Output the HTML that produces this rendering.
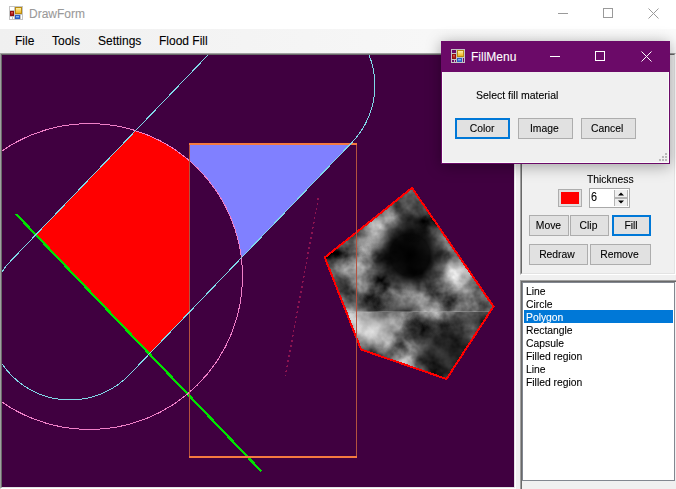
<!DOCTYPE html>
<html><head><meta charset="utf-8">
<style>
*{box-sizing:border-box}
html,body{margin:0;padding:0}
body{width:676px;height:489px;overflow:hidden;position:relative;background:#f0f0f0;font-family:"Liberation Sans",sans-serif;-webkit-text-stroke:0.1px currentColor}
.a{position:absolute}
.t{position:absolute;white-space:nowrap;line-height:1}
.c{transform:scaleX(0.94);transform-origin:0 0}
.btn{position:absolute;background:#e1e1e1;border:1px solid #adadad;font-size:11px;color:#000;text-align:center;line-height:19px;padding-right:2px}
.btn span{display:inline-block;transform:scaleX(0.94)}
.btn.f{border:2px solid #0078d7;line-height:17px}
</style></head><body>
<!-- title bar -->
<div class="a" style="left:0;top:0;width:676px;height:29px;background:#fff"></div>
<svg class="a" style="left:9px;top:6px" width="14" height="14" viewBox="0 0 14 14" shape-rendering="crispEdges">
 <defs><linearGradient id="yg" x1="0" y1="0" x2="0" y2="1"><stop offset="0" stop-color="#fff2a8"/><stop offset="1" stop-color="#f0b420"/></linearGradient>
 <linearGradient id="rg" x1="0" y1="0" x2="0" y2="1"><stop offset="0" stop-color="#e86050"/><stop offset="1" stop-color="#a01010"/></linearGradient>
 <linearGradient id="bg" x1="0" y1="0" x2="0" y2="1"><stop offset="0" stop-color="#a0c8ff"/><stop offset="1" stop-color="#3070d0"/></linearGradient></defs>
 <rect x="0" y="0" width="14" height="14" fill="#c4c4c4"/>
 <rect x="1" y="1" width="4" height="3" fill="#fff"/>
 <rect x="1" y="11" width="2" height="2" fill="#fff"/><rect x="4" y="11" width="1" height="2" fill="#fff"/>
 <rect x="12" y="9" width="1" height="4" fill="#fff"/>
 <rect x="6" y="1" width="7" height="7" fill="#b88a10"/><rect x="7" y="2" width="5" height="5" fill="url(#yg)"/>
 <rect x="1" y="5" width="4" height="5" fill="#901010"/><rect x="2" y="6" width="2" height="3" fill="url(#rg)"/>
 <rect x="6" y="9" width="5" height="4" fill="#2a5cc0"/><rect x="7" y="10" width="3" height="2" fill="url(#bg)"/>
</svg>
<div class="t" style="left:29px;top:8px;font-size:12px;color:#9a9a9a">DrawForm</div>
<div class="a" style="left:558px;top:13px;width:10px;height:1px;background:#9a9a9a"></div>
<div class="a" style="left:603px;top:8px;width:10px;height:10px;border:1px solid #9a9a9a"></div>
<svg class="a" style="left:648px;top:8px" width="11" height="11" viewBox="0 0 11 11"><path d="M0.5 0.5L10.5 10.5M10.5 0.5L0.5 10.5" stroke="#9a9a9a" stroke-width="1"/></svg>
<!-- menu -->
<div class="a" style="left:0;top:29px;width:676px;height:24px;background:linear-gradient(to right,#f0f0f0,#fbfbfb)"></div>
<div class="t" style="left:15px;top:35px;font-size:12px;color:#000">File</div>
<div class="t" style="left:52px;top:35px;font-size:12px;color:#000">Tools</div>
<div class="t" style="left:98px;top:35px;font-size:12px;color:#000">Settings</div>
<div class="t" style="left:159px;top:35px;font-size:12px;color:#000">Flood Fill</div>
<!-- canvas border -->
<div class="a" style="left:0;top:53px;width:516px;height:436px;border-top:1px solid #a0a0a0;border-left:1px solid #a0a0a0;border-right:1px solid #fff;border-bottom:1px solid #fff"></div>
<div class="a" style="left:1px;top:54px;width:514px;height:434px;border-top:1px solid #696969;border-left:1px solid #696969;border-right:1px solid #e3e3e3;border-bottom:1px solid #e3e3e3"></div>
<svg class="a" style="left:2px;top:55px" width="512" height="432" viewBox="2 55 512 432" shape-rendering="crispEdges">
 <defs>
  <clipPath id="ctop"><rect x="300" y="180" width="200" height="132"/></clipPath>
  <clipPath id="cbot"><rect x="300" y="312" width="200" height="80"/></clipPath>
  <clipPath id="pc"><polygon points="412,188 493.5,306.5 446.5,379 361,349.5 324.8,257.5"/></clipPath>
  <radialGradient id="dk" cx="0.5" cy="0.5" r="0.5"><stop offset="0" stop-color="#000"/><stop offset="0.5" stop-color="#000" stop-opacity="0.9"/><stop offset="1" stop-color="#000" stop-opacity="0"/></radialGradient>
  <radialGradient id="lt" cx="0.5" cy="0.5" r="0.5"><stop offset="0" stop-color="#fff" stop-opacity="0.8"/><stop offset="1" stop-color="#fff" stop-opacity="0"/></radialGradient>
  <filter id="cl1" x="0" y="0" width="100%" height="100%" color-interpolation-filters="sRGB"><feTurbulence type="fractalNoise" baseFrequency="0.038" numOctaves="4" seed="7"/><feColorMatrix type="matrix" values="1.25 0 0 0 -0.2  1.25 0 0 0 -0.2  1.25 0 0 0 -0.2  0 0 0 0 1"/></filter>
  <filter id="cl2" x="0" y="0" width="100%" height="100%" color-interpolation-filters="sRGB"><feTurbulence type="fractalNoise" baseFrequency="0.038" numOctaves="4" seed="21"/><feColorMatrix type="matrix" values="1.25 0 0 0 -0.2  1.25 0 0 0 -0.2  1.25 0 0 0 -0.2  0 0 0 0 1"/></filter>
 </defs>
 <rect x="2" y="55" width="512" height="432" fill="#400040"/>
 <!-- filled regions -->
 <path d="M135.58,130.60 A153.0,153.0 0 0 1 190,161.14 L190.00,311.45 L149.36,353.88 L35.80,234.77 Z" fill="#ff0000"/>
 <path d="M190,145 L349.45,145.00 L241.36,257.84 A153.0,153.0 0 0 0 190,161.14 Z" fill="#8080ff"/>
 <!-- green line -->
 <line x1="16" y1="214" x2="261.5" y2="471.5" stroke="#00e000" stroke-width="2.3"/>
 <!-- circle -->
 <circle cx="89.5" cy="276.5" r="153" fill="none" stroke="#f080c8" stroke-width="1"/>
 <!-- polygon texture -->
 <g clip-path="url(#pc)" shape-rendering="auto">
  <rect x="320" y="185" width="180" height="127" filter="url(#cl1)"/>
  <rect x="320" y="312" width="180" height="70" filter="url(#cl2)"/>
  <ellipse cx="410" cy="255" rx="40" ry="42" fill="url(#dk)"/>
  <ellipse cx="412" cy="215" rx="22" ry="30" fill="url(#dk)" opacity="0.45"/>
  <ellipse cx="338" cy="285" rx="16" ry="14" fill="url(#dk)" opacity="0.5"/>
  <ellipse cx="365" cy="240" rx="22" ry="16" fill="url(#lt)" opacity="0.45"/>
  <ellipse cx="465" cy="270" rx="24" ry="26" fill="url(#lt)" opacity="0.4"/>
  <ellipse cx="372" cy="332" rx="34" ry="26" fill="url(#lt)" opacity="0.75"/>
  <ellipse cx="448" cy="352" rx="38" ry="34" fill="url(#dk)" opacity="0.7"/>
  <ellipse cx="420" cy="330" rx="20" ry="16" fill="url(#dk)" opacity="0.35"/>
  <g clip-path="url(#ctop)"><ellipse cx="385" cy="305" rx="45" ry="14" fill="url(#dk)" opacity="0.35"/></g>
  <g clip-path="url(#cbot)"><ellipse cx="375" cy="322" rx="40" ry="16" fill="url(#lt)" opacity="0.45"/><ellipse cx="470" cy="318" rx="25" ry="12" fill="url(#dk)" opacity="0.3"/></g>
  <rect x="320" y="311" width="180" height="1" fill="#c8c8c8" opacity="0.3"/>
 </g>
 <polygon points="412,188 493.5,306.5 446.5,379 361,349.5 324.8,257.5" fill="none" stroke="#ff0000" stroke-width="2"/>
 <!-- rect -->
 <rect x="189" y="143" width="1" height="315" fill="#b4523f"/>
 <rect x="356" y="143" width="1" height="315" fill="#b4523f"/>
 <rect x="189" y="143" width="168" height="2" fill="#f47a40"/>
 <rect x="189" y="456" width="168" height="2" fill="#f47a40"/>
 <!-- capsule -->
 <path d="M233.64,28.24 L10.44,261.24 A82.2,82.2 0 0 0 129.16,374.96 L352.36,141.96 A82.2,82.2 0 0 0 233.64,28.24 Z" fill="none" stroke="#80d8e8" stroke-width="1"/>
 <!-- dotted line -->
 <line x1="318.4" y1="197.7" x2="285.3" y2="376.4" stroke="#8c1450" stroke-width="1.5" stroke-dasharray="2 3"/>
</svg>
<!-- right panel -->
<div class="a" style="left:520px;top:53px;width:156px;height:222px;border-top:1px solid #a0a0a0;border-left:1px solid #a0a0a0;border-bottom:1px solid #fff;border-right:1px solid #fff"></div>
<div class="a" style="left:521px;top:54px;width:154px;height:220px;border-top:1px solid #696969;border-left:1px solid #696969;border-bottom:1px solid #e3e3e3;border-right:1px solid #e3e3e3"></div>
<div class="t c" style="left:587px;top:174px;font-size:11px;color:#000">Thickness</div>
<div class="a" style="left:558px;top:189px;width:24px;height:18px;border:1px solid #adadad;background:#e1e1e1"></div>
<div class="a" style="left:561px;top:192px;width:18px;height:12px;background:#ff0000"></div>
<div class="a" style="left:589px;top:188px;width:41px;height:20px;border:1px solid #a9a9a9;background:#fff"></div>
<div class="t" style="left:591px;top:191px;font-size:12px;color:#000;transform:scaleX(0.9);transform-origin:0 0">6</div>
<div class="a" style="left:614px;top:190px;width:14px;height:16px;background:#f0f0f0;border-left:1px solid #b4b4b4;border-right:1px solid #b4b4b4;"></div>
<div class="a" style="left:615px;top:197px;width:12px;height:2px;background:#b4b4b4"></div>
<svg class="a" style="left:616px;top:191px" width="10" height="14" viewBox="0 0 10 14"><path d="M2 4.5L5 1.5L8 4.5Z M2 9.5L8 9.5L5 12.5Z" fill="#000"/></svg>
<div class="btn" style="left:529px;top:215px;width:40px;height:21px"><span>Move</span></div>
<div class="btn" style="left:570px;top:215px;width:39px;height:21px;padding-right:3px"><span>Clip</span></div>
<div class="btn f" style="left:612px;top:215px;width:39px;height:21px;padding-right:0"><span>Fill</span></div>
<div class="btn" style="left:529px;top:244px;width:59px;height:21px;padding-right:3px"><span>Redraw</span></div>
<div class="btn" style="left:590px;top:244px;width:61px;height:21px"><span>Remove</span></div>
<!-- listbox -->
<div class="a" style="left:520px;top:280px;width:156px;height:209px;border-top:1px solid #a0a0a0;border-left:1px solid #a0a0a0"></div>
<div class="a" style="left:521px;top:281px;width:155px;height:208px;border-top:1px solid #696969;border-left:1px solid #696969"></div>
<div class="a" style="left:522px;top:282px;width:153px;height:199px;border:1px solid #828790;background:#fff"></div>
<div class="a" style="left:524px;top:310px;width:149px;height:13px;background:#0078d7"></div>
<div class="t c" style="left:526px;top:285px;font-size:11px;line-height:13px;color:#000">Line<br>Circle<br><span style="color:#fff">Polygon</span><br>Rectangle<br>Capsule<br>Filled region<br>Line<br>Filled region</div>
<!-- dialog -->
<div class="a" style="left:441px;top:41px;width:229px;height:123px;border:1px solid #6b0a68;background:#f0f0f0;box-shadow:0 2px 14px rgba(0,0,0,0.35)"></div>
<div class="a" style="left:442px;top:72px;width:227px;height:91px;border:1px solid #fbfbfb;border-top:0"></div>
<div class="a" style="left:665px;top:153px;width:2px;height:2px;background:#b8b8b8;box-shadow:-3px 3px 0 #b8b8b8,0 3px 0 #b8b8b8,-6px 6px 0 #b8b8b8,-3px 6px 0 #b8b8b8,0 6px 0 #b8b8b8"></div>
<div class="a" style="left:441px;top:41px;width:229px;height:31px;background:#6b0a68"></div>
<svg class="a" style="left:451px;top:49px" width="14" height="14" viewBox="0 0 14 14" shape-rendering="crispEdges">
 <rect x="0" y="0" width="14" height="14" fill="#c4c4c4"/>
 <rect x="1" y="1" width="4" height="3" fill="#6b0a68"/>
 <rect x="1" y="11" width="2" height="2" fill="#6b0a68"/><rect x="4" y="11" width="1" height="2" fill="#6b0a68"/>
 <rect x="12" y="9" width="1" height="4" fill="#6b0a68"/>
 <rect x="6" y="1" width="7" height="7" fill="#b88a10"/><rect x="7" y="2" width="5" height="5" fill="url(#yg)"/>
 <rect x="1" y="5" width="4" height="5" fill="#901010"/><rect x="2" y="6" width="2" height="3" fill="url(#rg)"/>
 <rect x="6" y="9" width="5" height="4" fill="#2a5cc0"/><rect x="7" y="10" width="3" height="2" fill="url(#bg)"/>
</svg>
<div class="t" style="left:471px;top:51px;font-size:12px;color:#fff">FillMenu</div>
<div class="a" style="left:550px;top:56px;width:10px;height:1px;background:#fff"></div>
<div class="a" style="left:595px;top:51px;width:10px;height:10px;border:1px solid #fff"></div>
<svg class="a" style="left:641px;top:51px" width="11" height="11" viewBox="0 0 11 11"><path d="M0.5 0.5L10.5 10.5M10.5 0.5L0.5 10.5" stroke="#fff" stroke-width="1"/></svg>
<div class="t" style="left:476px;top:90px;font-size:11px;color:#000;transform:scaleX(0.955);transform-origin:0 0">Select fill material</div>
<div class="btn f" style="left:455px;top:118px;width:55px;height:21px;padding-right:1px"><span>Color</span></div>
<div class="btn" style="left:518px;top:118px;width:55px;height:21px"><span>Image</span></div>
<div class="btn" style="left:581px;top:118px;width:55px;height:21px"><span>Cancel</span></div>
</body></html>
